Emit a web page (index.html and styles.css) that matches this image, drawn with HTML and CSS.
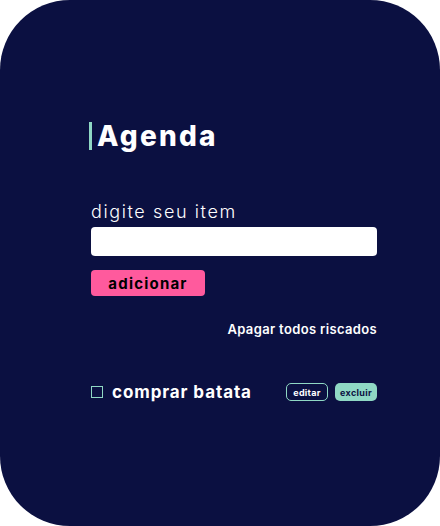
FILE: index.html
```html
<!DOCTYPE html>
<html lang="pt-BR">
<head>
<meta charset="utf-8">
<title>Agenda</title>
<link rel="stylesheet" href="styles.css">
</head>
<body>
<main class="card">
  <div class="content">
    <h1 class="title">Agenda</h1>
    <form class="form">
      <label class="label" for="item">digite seu item</label>
      <input class="input" id="item" type="text">
      <button class="add" type="button">adicionar</button>
    </form>
    <div class="clear-row"><button class="clear" type="button">Apagar todos riscados</button></div>
    <ul class="list">
      <li class="item">
        <span class="check"></span>
        <span class="item-text">comprar batata</span>
        <span class="actions">
          <button class="btn-edit" type="button">editar</button>
          <button class="btn-del" type="button">excluir</button>
        </span>
      </li>
    </ul>
  </div>
</main>
</body>
</html>
```
FILE: styles.css
```css
html, body {
  margin: 0;
  padding: 0;
  background: #ffffff;
}
body {
  font-family: "Inter", sans-serif;
}
.card {
  width: 440px;
  height: 526px;
  box-sizing: border-box;
  background: #0b1041;
  border-radius: 70px;
  padding: 122px 63px 0 91px;
  color: #ffffff;
}
.content {
  width: 286px;
}
.title {
  margin: 0 0 0 -2px;
  border-left: 3px solid #8fd8c4;
  padding-left: 5px;
  font-size: 28px;
  font-weight: 800;
  letter-spacing: 2.2px;
  line-height: 28px;
  height: 28px;
}
.form {
  display: flex;
  flex-direction: column;
  align-items: flex-start;
  margin-top: 50px;
}
.label {
  font-size: 18px;
  font-weight: 300;
  letter-spacing: 1.6px;
  line-height: 24px;
}
.input {
  margin-top: 3px;
  width: 286px;
  height: 29px;
  box-sizing: border-box;
  border: none;
  border-radius: 4px;
  background: #ffffff;
}
.add {
  margin-top: 14px;
  width: 114px;
  height: 26px;
  border: none;
  border-radius: 4px;
  background: #ff5a9d;
  color: #000000;
  font-family: inherit;
  font-size: 15px;
  font-weight: 700;
  letter-spacing: 1.2px;
  padding: 0;
}
.clear-row {
  display: flex;
  justify-content: flex-end;
  margin-top: 25px;
}
.clear {
  background: none;
  border: none;
  padding: 0;
  color: #ffffff;
  font-family: inherit;
  font-size: 13px;
  font-weight: 600;
  letter-spacing: 0.35px;
}
.list {
  list-style: none;
  margin: 46px 0 0;
  padding: 0;
}
.item {
  display: flex;
  align-items: center;
  height: 18px;
}
.check {
  width: 12px;
  height: 12px;
  box-sizing: border-box;
  border: 1.5px solid #8fd8c4;
}
.item-text {
  margin-left: 9px;
  font-size: 17px;
  font-weight: 700;
  letter-spacing: 0.9px;
}
.actions {
  margin-left: auto;
  display: flex;
  gap: 7px;
}
.btn-edit, .btn-del {
  width: 42px;
  height: 18px;
  box-sizing: border-box;
  border-radius: 5px;
  padding: 0;
  font-family: inherit;
  font-size: 9px;
  font-weight: 700;
  letter-spacing: 0.3px;
}
.btn-edit {
  background: transparent;
  border: 1px solid #8fd8c4;
  color: #ffffff;
}
.btn-del {
  background: #8fd8c4;
  border: none;
  color: #0b1041;
}
```
